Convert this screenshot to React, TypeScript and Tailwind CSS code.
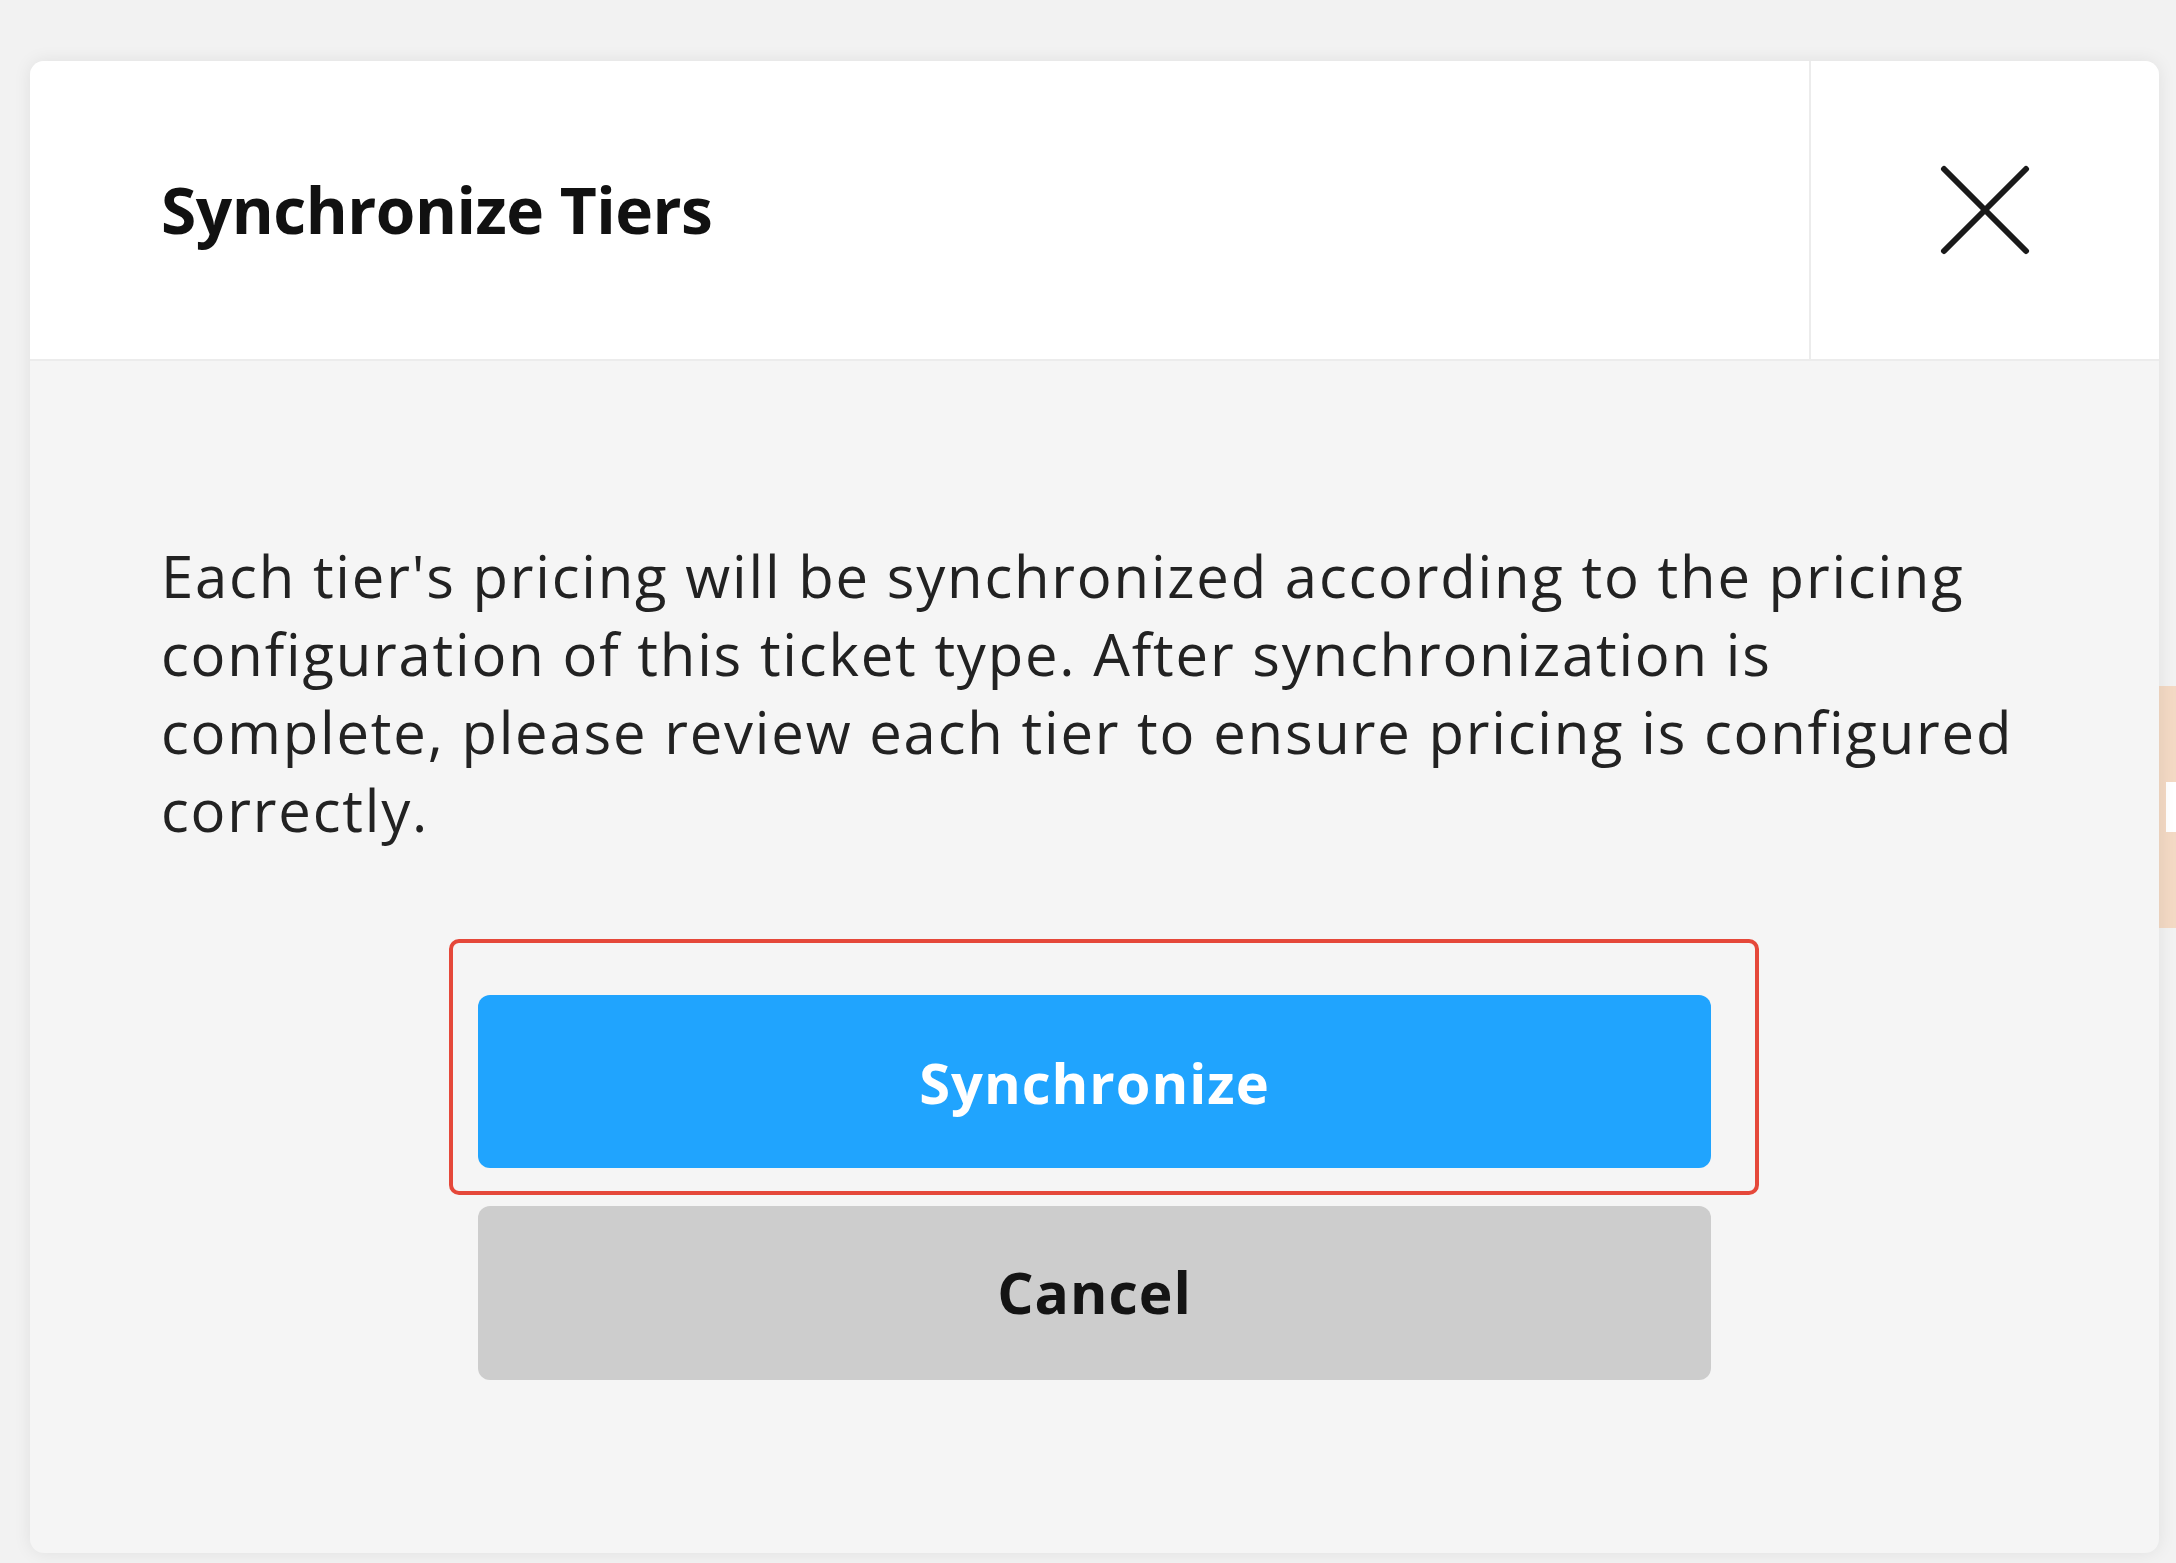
const App = () => {
  return (
    <div className="relative w-[2176px] h-[1563px] overflow-hidden bg-[#f2f2f2] pt-[61px] pl-[30px] font-['Open_Sans',sans-serif]">
      {/* page content peeking out behind the dialog */}
      <div className="absolute right-0 top-[686px] w-[17px] h-[242px] bg-[#f3d9c4]">
        <div className="mt-[96px] ml-[7px] w-[10px] h-[50px] bg-white" />
      </div>

      <div className="relative flex flex-col w-[2129px] h-[1492px] rounded-[14px] bg-[#f5f5f5] overflow-hidden shadow-[0_0_18px_rgba(0,0,0,0.08)]">
        <div className="flex h-[300px] bg-white border-b-2 border-[#ececec]">
          <div className="flex flex-1 items-center pl-[131px]">
            <h2 className="text-[64px] font-bold text-[#111111] tracking-[-0.5px]">Synchronize Tiers</h2>
          </div>
          <div className="flex w-[350px] items-center justify-center border-l-2 border-[#ececec]">
            <svg width="90" height="90" viewBox="0 0 90 90" fill="none" stroke="#1a1a1a" strokeWidth="6" strokeLinecap="round">
              <path d="M4 4L86 86" />
              <path d="M86 4L4 86" />
            </svg>
          </div>
        </div>

        <div className="flex flex-1 flex-col px-[131px] pt-[176px]">
          <p className="text-[58px] leading-[78px] tracking-[1.8px] text-[#222222]">
            Each tier's pricing will be synchronized according to the pricing
            <br />
            configuration of this ticket type. After synchronization is
            <br />
            complete, please review each tier to ensure pricing is configured
            <br />
            correctly.
          </p>

          <div className="mt-[146px] flex flex-col items-center gap-[38px]">
            <div className="relative">
              <div className="absolute -left-[29px] -top-[56px] -right-[48px] -bottom-[27px] rounded-[10px] border-[4px] border-[#e5483a]" />
              <button className="w-[1233px] h-[173px] rounded-[12px] bg-[#20a4fe] text-[56px] font-bold tracking-[1px] text-white">
                Synchronize
              </button>
            </div>
            <button className="w-[1233px] h-[174px] rounded-[12px] bg-[#cdcdcd] text-[57px] font-bold tracking-[1px] text-[#141414]">
              Cancel
            </button>
          </div>
        </div>
      </div>
    </div>
  );
};

export default App;
